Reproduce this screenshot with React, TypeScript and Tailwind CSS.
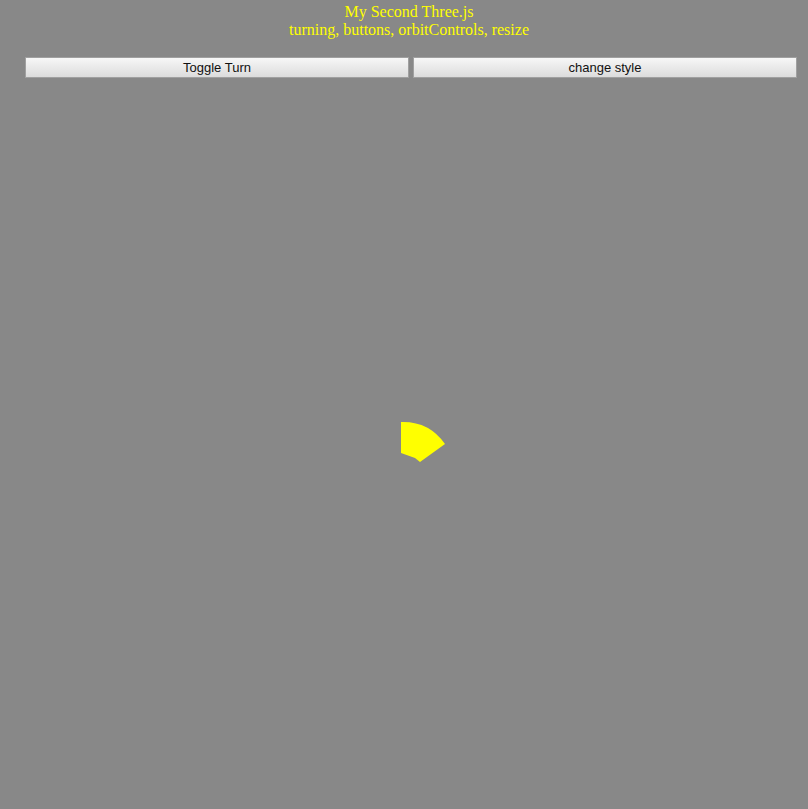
import React from 'react';

// 简单的 three.js 演示页面复刻
export default function App() {
  return (
    <div className="h-[809px] w-full bg-[#888888] overflow-hidden flex flex-col">
      {/* 标题 */}
      <div className="pt-[3px] pl-[10px] text-center text-[16px] leading-[18px] text-[#ffff00] [font-family:'Liberation_Serif',serif]">
        <div>My Second Three.js</div>
        <div>turning, buttons, orbitControls, resize</div>
      </div>

      {/* 按钮 */}
      <div className="mt-[18px] pl-[25px] pr-[11px] grid grid-cols-2 gap-[4px]">
        <button className="h-[21px] border border-[#a0a0a0] bg-gradient-to-b from-[#f7f7f7] to-[#dcdcdc] text-[13px] text-[#111] [font-family:'Liberation_Sans',Arial,sans-serif]">
          Toggle Turn
        </button>
        <button className="h-[21px] border border-[#a0a0a0] bg-gradient-to-b from-[#f7f7f7] to-[#dcdcdc] text-[13px] text-[#111] [font-family:'Liberation_Sans',Arial,sans-serif]">
          change style
        </button>
      </div>

      {/* 画布区域 */}
      <div className="relative flex-1">
        <svg className="absolute left-0 top-0" width="808" height="731" viewBox="0 78 808 731">
          <path fill="#ffff00" d="M401 422 Q429 421 445 444 L420 462 L415 458 L401 453 Z" />
        </svg>
      </div>
    </div>
  );
}
